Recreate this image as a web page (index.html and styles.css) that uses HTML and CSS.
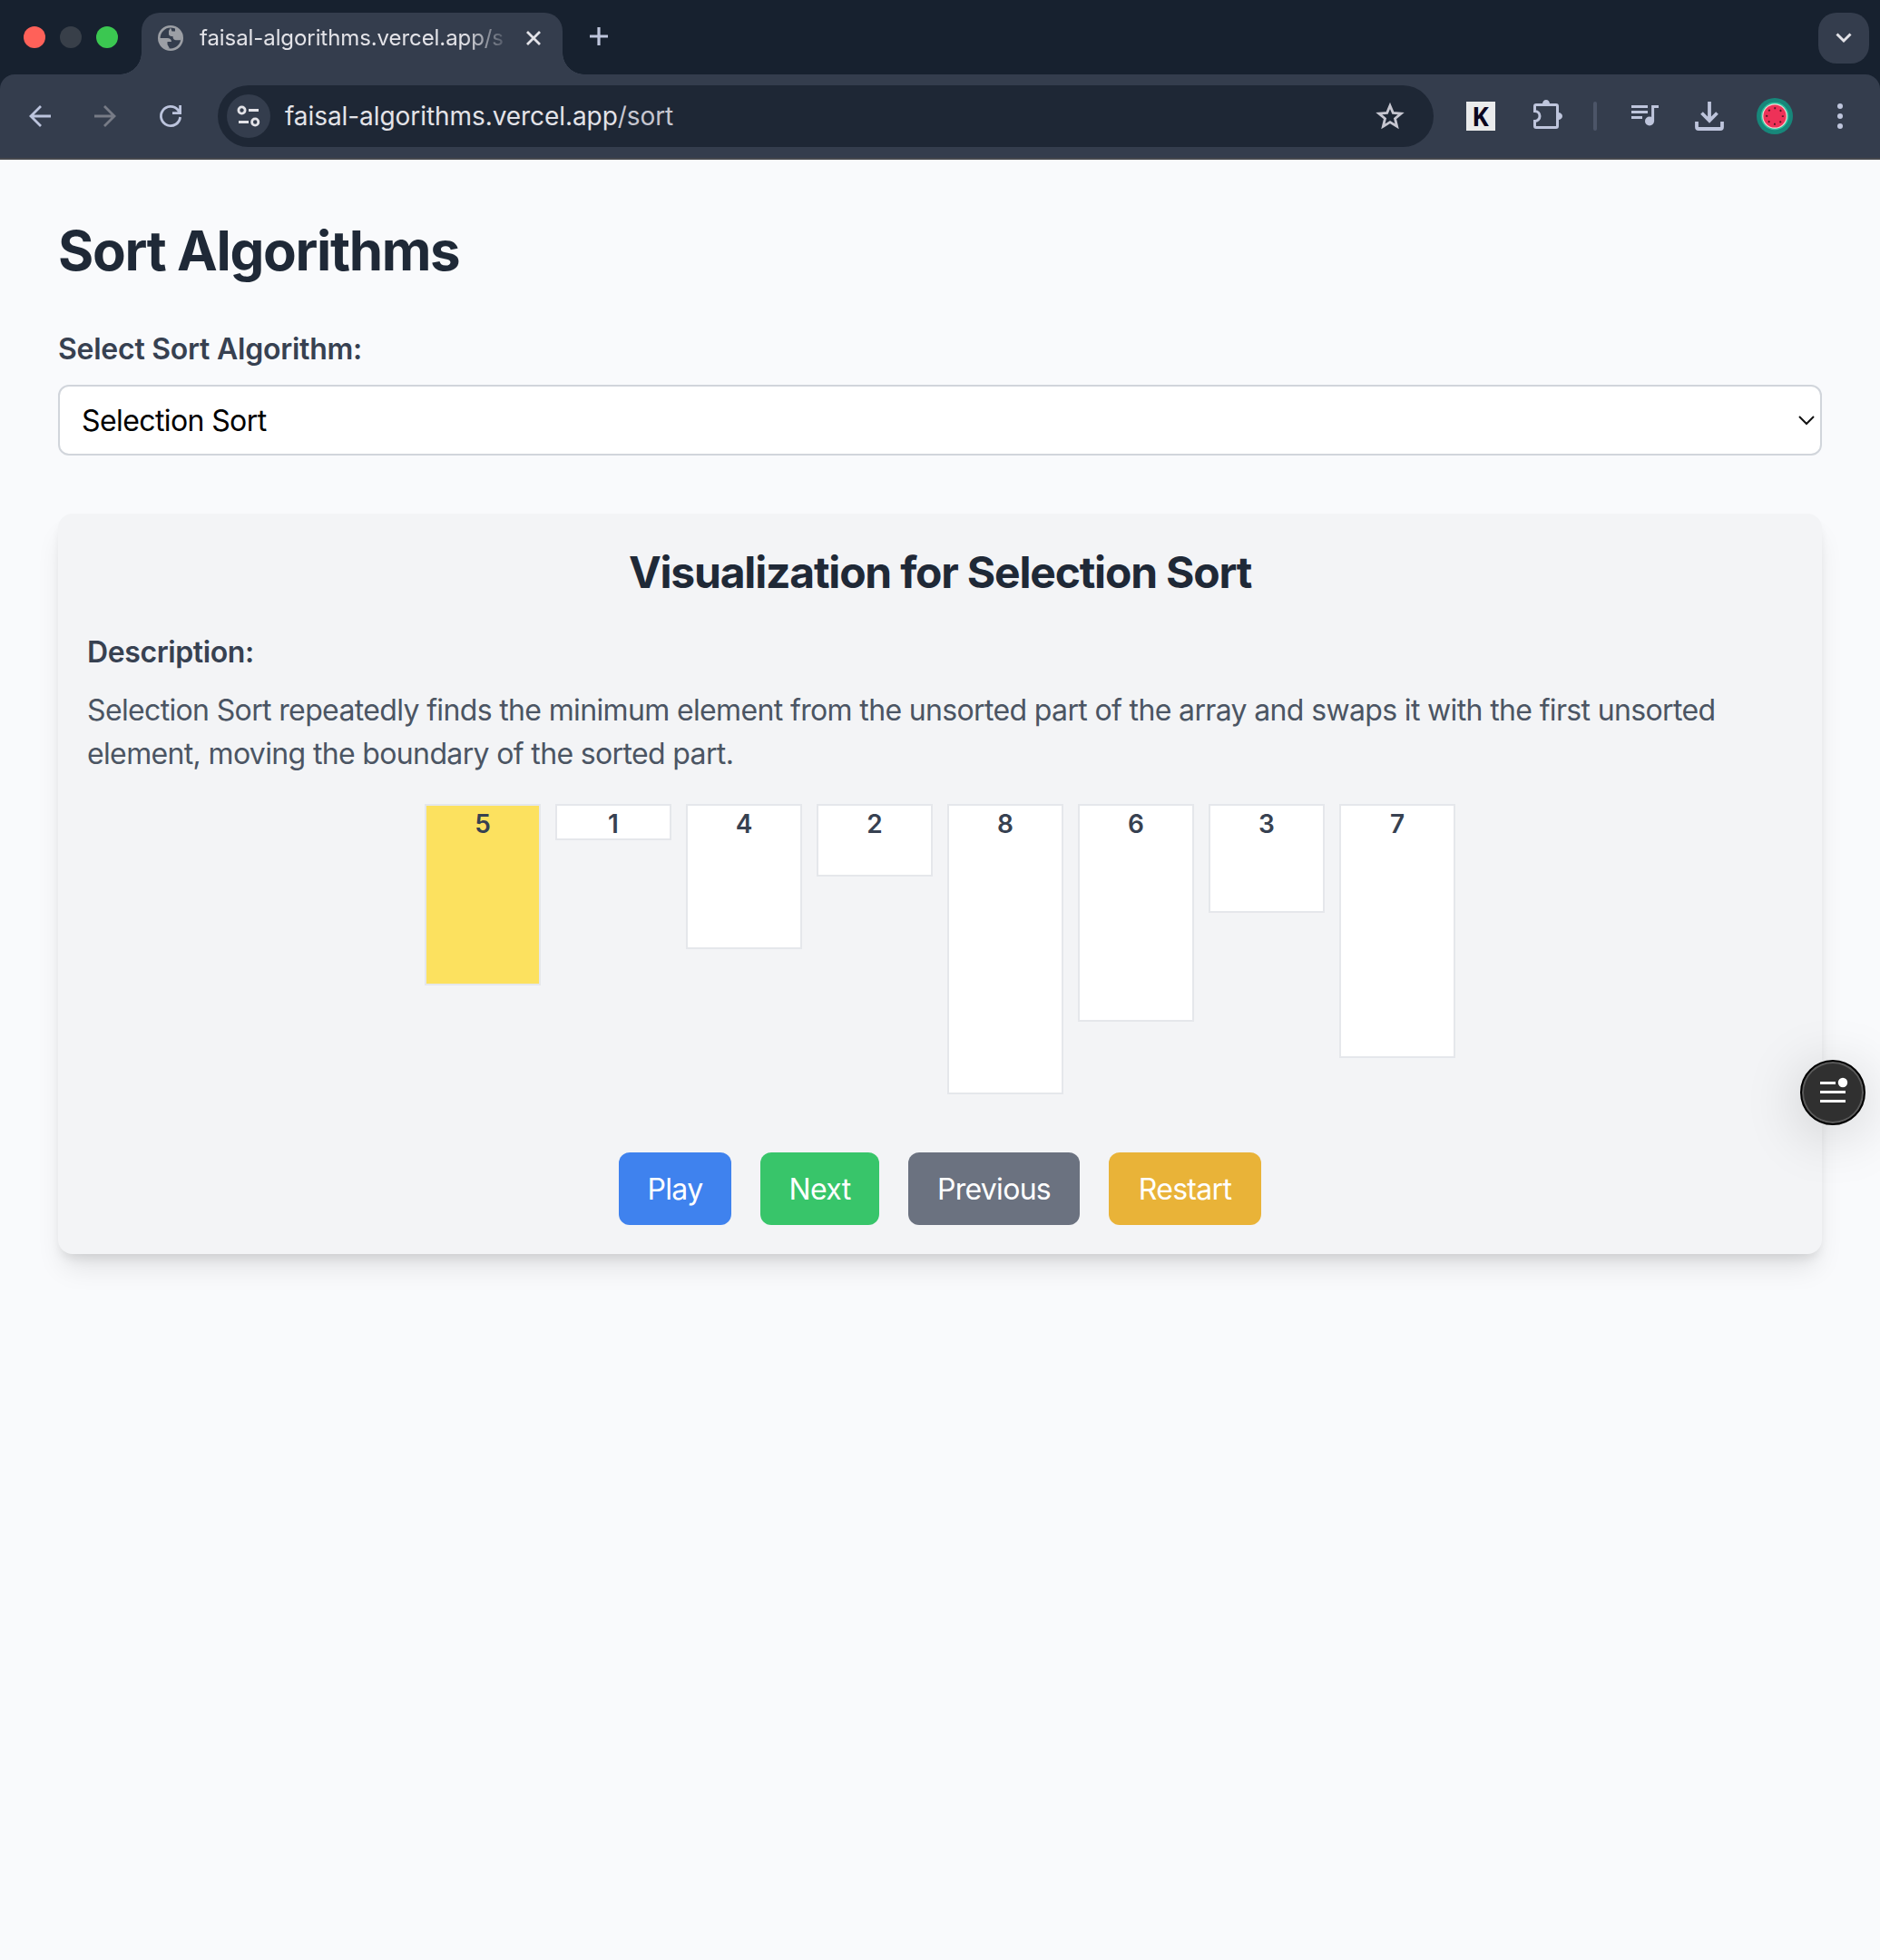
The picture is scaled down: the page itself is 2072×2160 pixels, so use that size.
FILE: index.html
```html
<!DOCTYPE html>
<html lang="en">
<head>
<meta charset="utf-8">
<title>Sort Algorithms</title>
<link rel="stylesheet" href="styles.css">
</head>
<body>
<header class="browser">
  <div class="tabstrip">
    <div class="lights"><i class="light red"></i><i class="light idle"></i><i class="light green"></i></div>
    <div class="tab">
      <svg class="globe" width="28" height="28" viewBox="0 0 28 28"><circle cx="14" cy="14" r="12.7" fill="none" stroke="#9c9fa5" stroke-width="2.6"/><path d="M1.5 14H10.5C13 14 15 15.500 15 18H10.500V21L13 25.500C6 26 1 20 1.500 14ZM14 2.500 12 6V9.500C12 11.500 14 12 16.500 12C16.500 15 18 16.300 20 16.300H25.500C27 11 24.500 4.500 19 3V6.500H15.500Z" fill="#9c9fa5"/></svg>
      <span class="tab-title">faisal-algorithms.vercel.app/s</span>
      <svg class="tab-close" width="16" height="16" viewBox="0 0 16 16"><path d="M1 1 15 15M15 1 1 15" stroke="#e3e3e8" stroke-width="2.8"/></svg>
    </div>
    <svg class="plus" width="20" height="20" viewBox="0 0 20 20"><path d="M10 0V20M0 10H20" stroke="#bec5dc" stroke-width="3.2"/></svg>
    <div class="tab-search"><svg width="18" height="12" viewBox="0 0 18 12"><path d="M1.500 1.500 9 9 16.500 1.500" fill="none" stroke="#e3e3e8" stroke-width="3"/></svg></div>
  </div>
  <div class="toolbar">
    <svg class="nav" width="24" height="24" viewBox="0 0 24 24"><path d="M24 12H2M13 1 2 12 13 23" fill="none" stroke="#bcc4dd" stroke-width="2.8"/></svg>
    <svg class="nav" width="24" height="24" viewBox="0 0 24 24"><path d="M0 12H22M11 1 22 12 11 23" fill="none" stroke="#777b86" stroke-width="2.8"/></svg>
    <svg class="nav" width="24" height="24" viewBox="0 0 24 24"><path d="M22.600 13A10.600 10.600 0 1 1 20 5L22 8M22.600 0V8.600H14" fill="none" stroke="#bcc4dd" stroke-width="2.8"/></svg>
    <div class="omnibox">
      <span class="site-info"><svg width="26" height="24" viewBox="0 0 26 24" fill="none" stroke="#e3e3e8" stroke-width="2.800"><circle cx="5.500" cy="5.500" r="3.600"/><path d="M13 5.500H24M2 18.500H13"/><circle cx="20.200" cy="18.500" r="3.600"/></svg></span>
      <span class="url">faisal-algorithms.vercel.app<span class="path">/sort</span></span>
      <svg class="star" width="32" height="30" viewBox="0 0 32 30"><path d="M16 3.500 19.300 11.400 28.200 12.100 21.500 17.700 23.600 26.300 16 21.600 8.400 26.300 10.500 17.700 3.800 12.100 12.700 11.400Z" fill="none" stroke="#c6c6d0" stroke-width="2.800"/></svg>
    </div>
    <span class="ext-k">K</span>
    <svg class="puzzle" width="32" height="32" viewBox="0 0 32 32"><path d="M3 5.500H25Q26.500 5.500 26.500 7V29Q26.500 30.500 25 30.500H3Q1.500 30.500 1.500 29V23.500A5.500 5.500 0 0 0 1.500 12.500V7Q1.500 5.500 3 5.500Z" fill="none" stroke="#bec5dc" stroke-width="3"/><path d="M10 4.500A4 4.500 0 0 1 18 4.500ZM27.500 14A4.500 4 0 0 1 27.500 22Z" fill="#bec5dc"/></svg>
    <i class="divider"></i>
    <svg class="music" width="30" height="24" viewBox="0 0 30 24"><path d="M0 1.500H18M0 7.500H18M0 13.500H12M23.600 18V1.500H30" fill="none" stroke="#bec5dc" stroke-width="3"/><circle cx="20" cy="17.500" r="5" fill="#bec5dc"/></svg>
    <svg class="download" width="32" height="32" viewBox="0 0 32 32"><path d="M16 0V21M7.500 12.500 16 21 24.500 12.500M2 22V28Q2 30 4 30H28Q30 30 30 28V22" fill="none" stroke="#bec5dc" stroke-width="3.800"/></svg>
    <svg class="avatar" width="40" height="40" viewBox="0 0 40 40"><circle cx="20" cy="20" r="20" fill="#17877a"/><circle cx="20" cy="20" r="15.300" fill="#2bc3a0"/><circle cx="20" cy="20" r="13.800" fill="#f3d5d2"/><circle cx="20" cy="20" r="12.600" fill="#ee3158"/><circle cx="20" cy="20" r="8.800" fill="none" stroke="#4b1722" stroke-width="2" stroke-dasharray="1.900 5.012" stroke-dashoffset=".950"/></svg>
    <svg class="menu" width="6" height="28" viewBox="0 0 6 28" fill="#bec5dc"><circle cx="3" cy="3" r="3"/><circle cx="3" cy="14" r="3"/><circle cx="3" cy="25" r="3"/></svg>
  </div>
</header>
<main class="page">
  <h1 class="title">Sort Algorithms</h1>
  <label class="label">Select Sort Algorithm:</label>
  <div class="select"><span>Selection Sort</span><svg width="18" height="10" viewBox="0 0 18 10"><path d="M1 1 9 9 17 1" fill="none" stroke="#111" stroke-width="2"/></svg></div>
  <section class="card">
    <h2 class="card-title">Visualization for Selection Sort</h2>
    <h3 class="subhead">Description:</h3>
    <p class="text">Selection Sort repeatedly finds the minimum element from the unsorted part of the array and swaps it with the first unsorted<br>element, moving the boundary of the sorted part.</p>
    <div class="bars">
      <div class="bar current" style="height:200px">5</div>
      <div class="bar" style="height:40px">1</div>
      <div class="bar" style="height:160px">4</div>
      <div class="bar" style="height:80px">2</div>
      <div class="bar" style="height:320px">8</div>
      <div class="bar" style="height:240px">6</div>
      <div class="bar" style="height:120px">3</div>
      <div class="bar" style="height:280px">7</div>
    </div>
    <div class="actions">
      <button class="btn play">Play</button>
      <button class="btn next">Next</button>
      <button class="btn previous">Previous</button>
      <button class="btn restart">Restart</button>
    </div>
  </section>
</main>
<div class="fab"><svg width="28" height="30" viewBox="0 0 28 30"><path d="M0 4.500H17M0 14.500H28M0 24.500H28" stroke="#fff" stroke-width="3"/><circle cx="25" cy="4" r="5.200" fill="#fff"/></svg></div>
</body>
</html>
```
FILE: styles.css
```css
* { box-sizing: border-box; }
body { margin: 0; height: 2160px; overflow: hidden; background: #f9fafc; font-family: Inter, "Liberation Sans", sans-serif; color: #1f2937; }
svg { display: block; flex: none; overflow: visible; }

.browser { background: #17212f; }
.tabstrip { height: 82px; display: flex; align-items: flex-start; padding-right: 12px; }
.lights { display: flex; gap: 16px; padding: 29px 0 0 26px; width: 156px; }
.light { width: 24px; height: 24px; border-radius: 50%; }
.red { background: #ff6159; }
.idle { background: #383f49; }
.green { background: #3bc751; }
.tab { position: relative; width: 464px; height: 68px; margin-top: 14px; padding: 0 24px 12px 18px; margin-right: 0; background: #343d4d; border-radius: 20px 20px 0 0; margin-left: 0; display: flex; align-items: center; width: 464px; }
.tab::before, .tab::after { content: ""; position: absolute; bottom: 0; width: 24px; height: 24px; }
.tab::before { left: -24px; background: radial-gradient(circle at 0 0, transparent 23.500px, #343d4d 24px); }
.tab::after { right: -24px; background: radial-gradient(circle at 100% 0, transparent 23.500px, #343d4d 24px); }
.tab-title { width: 336px; margin-left: 18px; overflow: hidden; white-space: nowrap; font-size: 24px; line-height: 36px; letter-spacing: -.08px; color: #e3e3e8; -webkit-mask-image: linear-gradient(90deg, #000 292px, transparent 345px); mask-image: linear-gradient(90deg, #000 292px, transparent 345px); }
.tab-close { margin-left: auto; }
.plus { margin: 30px 0 0 30px; }
.tab-search { width: 56px; height: 56px; margin: 14px 0 0 auto; border-radius: 20px; background: #343d4d; display: grid; place-items: center; }

.toolbar { height: 94px; background: #343d4d; border-bottom: 2px solid #46484d; border-radius: 16px 16px 0 0; display: flex; align-items: center; padding: 0 41px 0 32px; }
.nav { margin-right: 48px; }
.omnibox { width: 1340px; height: 68px; margin-left: -8px; border-radius: 34px; background: #1e2735; display: flex; align-items: center; padding: 0 32px 0 10px; }
.site-info { width: 48px; height: 48px; border-radius: 50%; background: #343d4d; display: grid; place-items: center; }
.url { margin-left: 16px; font-size: 28px; line-height: 40px; letter-spacing: -.07px; color: #e3e3e8; white-space: nowrap; }
.path { color: #c6c6d0; }
.star { margin-left: auto; }
.ext-k { width: 32px; height: 32px; margin-left: 36px; padding-right: 1px; background: #eaebec; color: #0b0620; font: 700 28px/32px "Noto Sans", sans-serif; text-align: center; }
.puzzle { margin: -4px 0 0 42px; }
.divider { width: 4px; height: 32px; margin-left: 34px; border-radius: 2px; background: #4c5568; }
.music { margin-left: 38px; }
.download { margin-left: 40px; }
.avatar { margin-left: 36px; }
.menu { margin-left: auto; }

.page { padding: 64px; }
.title { margin: 0 0 48px; font-size: 60px; line-height: 72px; font-weight: 700; letter-spacing: -1.35px; }
.label { display: block; padding-top: 1px; margin-bottom: 15px; font-size: 32px; line-height: 48px; font-weight: 600; letter-spacing: -.25px; color: #374151; }
.select { height: 78px; padding: 0 6px 0 24px; border: 2px solid #d1d5db; border-radius: 12px; background: #fff; display: flex; align-items: center; justify-content: space-between; font-size: 32px; letter-spacing: -.6px; color: #000; }
.card { margin-top: 64px; padding: 33px 32px 32px; border-radius: 16px; background: #f3f4f6; box-shadow: 0 20px 30px -6px rgba(0,0,0,.1), 0 8px 12px -4px rgba(0,0,0,.1); }
.card-title { margin: 0 0 32px; font-size: 48px; line-height: 64px; font-weight: 700; letter-spacing: -1.2px; text-align: center; }
.subhead { margin: 0 0 16px; font-size: 32px; line-height: 48px; font-weight: 600; letter-spacing: -.4px; color: #374151; }
.text { margin: 0 0 31px; font-size: 32px; line-height: 48px; letter-spacing: -.645px; color: #4b5563; white-space: nowrap; }
.bars { height: 320px; display: flex; justify-content: center; align-items: flex-start; gap: 16px; }
.bar { width: 128px; border: 2px solid #e5e7eb; background: #fff; font-size: 28px; line-height: 40px; font-weight: 600; text-align: center; color: #374151; }
.current { background: #fce15f; }
.actions { margin-top: 64px; display: flex; justify-content: center; gap: 32px; }
.btn { height: 80px; padding: 2px 0 0; border: 0; border-radius: 12px; color: #fff; font: 400 32px/48px Inter, sans-serif; letter-spacing: -.7px; white-space: nowrap; }
.play { width: 124px; background: #3f82ee; }
.next { width: 131px; background: #38c56a; }
.previous { width: 189px; background: #6b7280; }
.restart { width: 168px; background: #e9b338; }

.fab { position: fixed; right: 16px; top: 1168px; width: 72px; height: 72px; border: 2px solid #000; border-radius: 50%; background: #303030; box-shadow: inset 0 0 0 2px #5a5a5a, 0 10px 64px rgba(0,0,0,.18); display: grid; place-items: center; }
```
